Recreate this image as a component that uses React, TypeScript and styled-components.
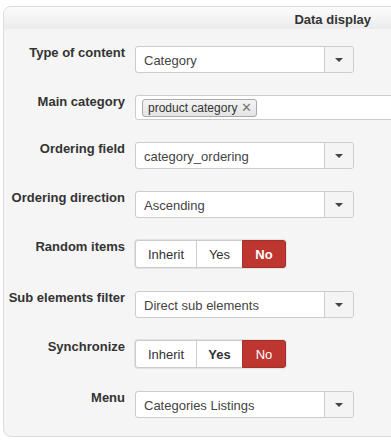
import styled, { createGlobalStyle } from 'styled-components';

const GlobalStyle = createGlobalStyle`
  html, body {
    margin: 0;
    padding: 0;
    background: #fff;
    overflow: hidden;
  }
  body {
    font-family: "Liberation Sans", Arial, sans-serif;
    color: #333;
  }
`;

const Panel = styled.div`
  margin: 6px 0 0 3px;
  width: 410px;
  height: 431px;
  box-sizing: border-box;
  border: 1px solid #dcdcdc;
  border-radius: 8px;
  background-color: #f5f5f5;
  overflow: hidden;
`;

const PanelHeader = styled.div`
  height: 22px;
  box-sizing: border-box;
  padding: 5px 41px 0 0;
  text-align: right;
  font-weight: bold;
  font-size: 13px;
  color: #333;
  background: linear-gradient(#fbfbfb, #ececec);
`;

const Body = styled.div`
  display: flex;
  flex-direction: column;
  gap: 22px;
  padding-top: 17px;
`;

const Row = styled.div`
  display: flex;
  align-items: flex-start;
`;

const Label = styled.div`
  width: 121px;
  flex-shrink: 0;
  margin-top: -1px;
  text-align: right;
  font-weight: bold;
  font-size: 13px;
  color: #333;
`;

const Control = styled.div`
  margin-left: 10px;
`;

const SelectBox = styled.div`
  display: flex;
  width: 219px;
  height: 27px;
  box-sizing: border-box;
  border: 1px solid #ccc;
  border-radius: 3px;
  background: #fff;
  font-size: 13px;
  color: #444;
`;

const SelectValue = styled.div`
  flex: 1;
  padding: 6px 0 0 8px;
`;

const ArrowButton = styled.div`
  width: 28px;
  display: flex;
  align-items: center;
  justify-content: center;
  border-left: 1px solid #ccc;
  background: #f4f4f4;
  border-radius: 0 3px 3px 0;
`;

const Caret = styled.span`
  width: 0;
  height: 0;
  border-left: 4px solid transparent;
  border-right: 4px solid transparent;
  border-top: 4px solid #444;
`;

const MultiBox = styled.div`
  display: flex;
  align-items: center;
  width: 280px;
  height: 25px;
  box-sizing: border-box;
  padding-left: 6px;
  border: 1px solid #ccc;
  border-radius: 3px;
  background: #fff;
`;

const Tag = styled.div`
  display: flex;
  align-items: center;
  gap: 4px;
  height: 18px;
  box-sizing: border-box;
  padding: 0 4px 0 5px;
  border: 1px solid #aaa;
  border-radius: 3px;
  background: linear-gradient(#f4f4f4, #e4e4e4);
  font-size: 12px;
  color: #333;
`;

const TagClose = styled.span`
  font-size: 13px;
  color: #777;
  line-height: 1;
`;

const ToggleFrame = styled.div`
  display: inline-flex;
  margin: -1px 0 0 -1px;
  padding: 1px;
  background: #e2e2e2;
  border-radius: 4px;
`;

const ToggleButton = styled.div<{ $active?: boolean; $bold?: boolean; $w: number }>`
  width: ${(p) => p.$w}px;
  height: 28px;
  box-sizing: border-box;
  display: flex;
  align-items: center;
  justify-content: center;
  font-size: 13px;
  font-weight: ${(p) => (p.$bold ? 'bold' : 'normal')};
  color: ${(p) => (p.$active ? '#fff' : '#333')};
  background: ${(p) => (p.$active ? '#bd362f' : '#fff')};
  border: 1px solid ${(p) => (p.$active ? '#a3302a' : '#ccc')};
  margin-left: -1px;
  &:first-child {
    margin-left: 0;
    border-radius: 3px 0 0 3px;
  }
  &:last-child {
    border-radius: 0 3px 3px 0;
  }
`;

const Select = ({ value }: { value: string }) => (
  <SelectBox>
    <SelectValue>{value}</SelectValue>
    <ArrowButton>
      <Caret />
    </ArrowButton>
  </SelectBox>
);

const Toggle = ({ yesBold, noBold }: { yesBold?: boolean; noBold?: boolean }) => (
  <ToggleFrame>
    <ToggleButton $w={62}>Inherit</ToggleButton>
    <ToggleButton $w={47} $bold={yesBold}>Yes</ToggleButton>
    <ToggleButton $w={44} $active $bold={noBold}>No</ToggleButton>
  </ToggleFrame>
);

const App = () => {
  return (
    <>
      <GlobalStyle />
      <Panel>
        <PanelHeader>Data display</PanelHeader>
        <Body>
          <Row>
            <Label>Type of content</Label>
            <Control><Select value="Category" /></Control>
          </Row>
          <Row>
            <Label>Main category</Label>
            <Control>
              <MultiBox>
                <Tag>
                  product category<TagClose>✕</TagClose>
                </Tag>
              </MultiBox>
            </Control>
          </Row>
          <Row>
            <Label>Ordering field</Label>
            <Control><Select value="category_ordering" /></Control>
          </Row>
          <Row>
            <Label>Ordering direction</Label>
            <Control><Select value="Ascending" /></Control>
          </Row>
          <Row>
            <Label>Random items</Label>
            <Control><Toggle noBold /></Control>
          </Row>
          <Row>
            <Label>Sub elements filter</Label>
            <Control><Select value="Direct sub elements" /></Control>
          </Row>
          <Row>
            <Label>Synchronize</Label>
            <Control><Toggle yesBold /></Control>
          </Row>
          <Row>
            <Label>Menu</Label>
            <Control><Select value="Categories Listings" /></Control>
          </Row>
        </Body>
      </Panel>
    </>
  );
};

export default App;
